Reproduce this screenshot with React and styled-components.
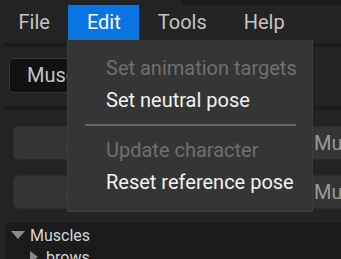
import React from 'react'
import styled, { createGlobalStyle } from 'styled-components'

const Global = createGlobalStyle`
  html, body {
    margin: 0;
    padding: 0;
    background: #232323;
    overflow: hidden;
  }
  body {
    font-family: Roboto, 'Liberation Sans', sans-serif;
    width: 341px;
    height: 259px;
  }
`

const Screen = styled.div`
  position: relative;
  width: 341px;
  height: 259px;
  overflow: hidden;
  background: #232323;
`

const MenuBar = styled.div`
  display: flex;
  height: 35px;
  padding-top: 5px;
  background: linear-gradient(#1b1b1b, #1b1b1b) no-repeat 181px 0 / 100% 5px;
`

const MenuTitle = styled.div`
  display: flex;
  align-items: center;
  padding: 0 18.5px 2px;
  font-size: 20px;
  color: ${p => (p.active ? '#ffffff' : '#c4c4c4')};
  background: ${p => (p.active ? '#0a74e2' : 'transparent')};
`

const Body = styled.div`
  display: flex;
  flex-direction: column;
  padding-left: 3px;
`

const Divider = styled.div`
  height: 4px;
  margin-top: ${p => p.top || 0}px;
  background: #1b1b1b;
`

const TabRow = styled.div`
  display: flex;
  padding: 11px 6px 13px;
`

const Tab = styled.div`
  display: flex;
  align-items: center;
  width: 150px;
  height: 35px;
  padding-left: 17px;
  padding-bottom: 2px;
  box-sizing: border-box;
  border: 1px solid #363636;
  border-radius: 5px;
  background: #111111;
  color: #c4c4c4;
  font-size: 20px;
`

const ButtonGrid = styled.div`
  display: grid;
  grid-template-columns: 212px 230px;
  column-gap: 7px;
  row-gap: 15px;
  padding: 16px 0 0 10px;
`

const Button = styled.div`
  display: flex;
  align-items: center;
  justify-content: ${p => (p.left ? 'flex-start' : 'center')};
  padding-left: ${p => (p.left ? 81 : 0)}px;
  height: 34px;
  box-sizing: border-box;
  border: 1px solid #2b2b2b;
  border-radius: 5px;
  background: #353535;
  color: #9a9a9a;
  font-size: 20px;
`

const Tree = styled.div`
  margin: 14px 0 0 3px;
  padding-top: 1px;
  background: #1b1b1b;
  height: 40px;
`

const TreeRow = styled.div`
  display: flex;
  align-items: center;
  gap: 5px;
  height: 22px;
  padding-left: ${p => 5 + p.depth * 16}px;
  color: #d6d6d6;
  font-size: 16px;
`

const Dropdown = styled.div`
  position: absolute;
  left: 67px;
  top: 40px;
  width: 246px;
  height: 172px;
  box-sizing: border-box;
  padding-top: 12px;
  background: #353535;
  border: 1px solid #3c3c3c;
  border-top: none;
  display: flex;
  flex-direction: column;
`

const Item = styled.div`
  display: flex;
  align-items: center;
  flex-shrink: 0;
  height: 32px;
  padding-left: 38px;
  padding-bottom: 1px;
  box-sizing: border-box;
  font-size: 20px;
  color: ${p => (p.disabled ? '#6f6f6f' : '#f2f2f2')};
`

const Separator = styled.div`
  flex-shrink: 0;
  height: 2px;
  margin: 8px 16px 8px 17px;
  background: #666666;
`

const Arrow = ({ open }) => (
  <svg width="14" height="12" viewBox="0 0 14 12">
    {open ? (
      <path d="M0 2 L14 2 L7 10 Z" fill="#8a8a8a" />
    ) : (
      <path d="M3 0 L11 6 L3 12 Z" fill="#8a8a8a" />
    )}
  </svg>
)

export default function App() {
  return (
    <Screen>
      <Global />
      <MenuBar>
        <MenuTitle>File</MenuTitle>
        <MenuTitle active>Edit</MenuTitle>
        <MenuTitle>Tools</MenuTitle>
        <MenuTitle>Help</MenuTitle>
      </MenuBar>
      <Body>
        <Divider top={3} />
        <TabRow>
          <Tab>Muscles</Tab>
        </TabRow>
        <Divider />
        <ButtonGrid>
          <Button>Add muscle</Button>
          <Button left>Muscles</Button>
          <Button>Add muscle</Button>
          <Button left>Muscles</Button>
        </ButtonGrid>
        <Tree>
          <TreeRow depth={0}>
            <Arrow open />
            Muscles
          </TreeRow>
          <TreeRow depth={1}>
            <Arrow />
            brows
          </TreeRow>
        </Tree>
      </Body>
      <Dropdown>
        <Item disabled>Set animation targets</Item>
        <Item>Set neutral pose</Item>
        <Separator />
        <Item disabled>Update character</Item>
        <Item>Reset reference pose</Item>
      </Dropdown>
    </Screen>
  )
}
